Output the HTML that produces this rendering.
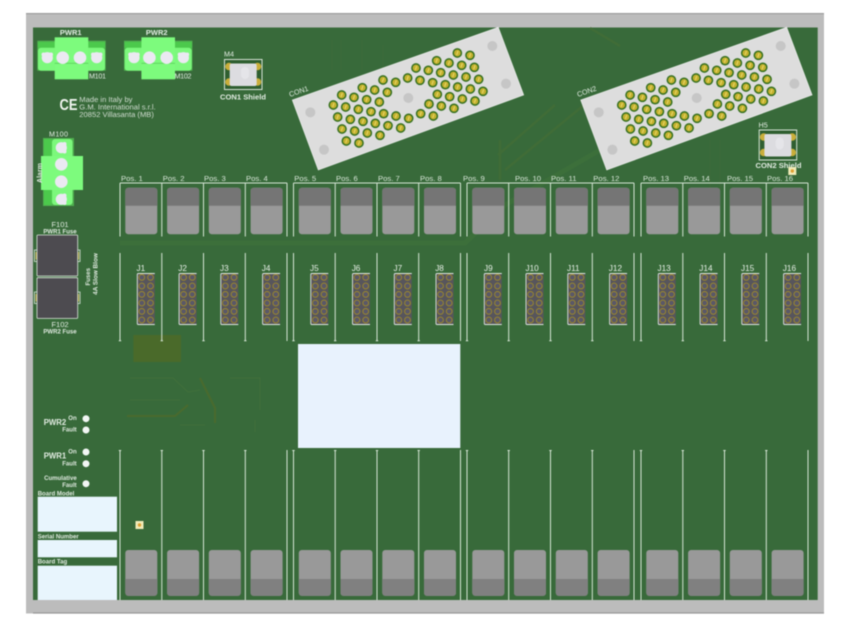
<!DOCTYPE html>
<html><head><meta charset="utf-8"><style>
html,body{margin:0;padding:0;background:#fff;width:850px;height:632px;overflow:hidden}
svg{display:block;filter:blur(.4px)}
text{font-family:"Liberation Sans",sans-serif;fill:#e2ece2}
.b{font-weight:bold}
.p{font-size:7.7px;fill:#d8e6d8}
.j{font-size:8.2px;fill:#e8f0e8}
.s{font-size:6.05px;font-weight:bold;fill:#dfe9df}
.m{font-size:7.6px;fill:#d0dcd0}
.k{font-size:7.2px;fill:#e2ece2}
</style></head><body>
<svg width="850" height="632" viewBox="0 0 850 632" xmlns="http://www.w3.org/2000/svg">
<defs>
<g id="rt"><rect width="32" height="46.5" rx="3" fill="#999"/><path d="M0 18V3a3 3 0 0 1 3-3h26a3 3 0 0 1 3 3v15z" fill="#757575"/></g>
<g id="rb"><rect width="32" height="45.7" rx="3" fill="#999"/><path d="M0 29h32v14a3 3 0 0 1-3 3H3a3 3 0 0 1-3-3z" fill="#808080"/></g>
<g id="ho"><circle r="2.9" fill="#5a5868" stroke="#a08c28" stroke-width=".9"/></g>
<g id="jc">
<rect width="18" height="51.7" rx="1.5" fill="#57555c"/>
<path d="M18 .5H1.5Q.5.5.5 1.5v49q0 1 1 1H18" fill="none" stroke="#dfe8df" stroke-width=".9"/>
<use href="#ho" x="5" y="4.4"/><use href="#ho" x="13.7" y="4.4"/>
<use href="#ho" x="5" y="13"/><use href="#ho" x="13.7" y="13"/>
<use href="#ho" x="5" y="21.4"/><use href="#ho" x="13.7" y="21.4"/>
<use href="#ho" x="5" y="30"/><use href="#ho" x="13.7" y="30"/>
<use href="#ho" x="5" y="38.4"/><use href="#ho" x="13.7" y="38.4"/>
<use href="#ho" x="5" y="47"/><use href="#ho" x="13.7" y="47"/>
</g>
<g id="c">
<use href="#rt" x="5.3" y="187.7"/>
<use href="#rb" x="5.3" y="550"/>
<use href="#jc" x="16.8" y="273"/>
<path d="M0 183V236.5M0 253V341M-1.2 340.7H1.2M0 450V600M-1.2 450.5H1.2" fill="none" stroke="#d5e5d5" stroke-width="1"/>
</g>
<g id="g"><circle r="14.5" fill="#35701f"/><circle r="10" fill="#c4b12e"/><path d="M2-6-2 6" stroke="#ead96c" stroke-width="3"/></g>
<g id="mh"><circle r="15" fill="#c6c6c6"/></g>
<g id="con">
<polygon points="292.3,100 498.3,27.3 523.7,95 318.3,170" fill="#dddddd" stroke="#f0f0f0" stroke-width=".6"/>
<g transform="translate(285,15) scale(.33333)">
<use href="#mh" x="622" y="93"/><use href="#mh" x="663" y="206"/><use href="#mh" x="370" y="249"/><use href="#mh" x="76" y="292"/><use href="#mh" x="117" y="404"/>
<use href="#g" x="517" y="114"/><use href="#g" x="555" y="121"/>
<use href="#g" x="455" y="137"/><use href="#g" x="492" y="144"/><use href="#g" x="530" y="151"/><use href="#g" x="568" y="157"/>
<use href="#g" x="393" y="159"/><use href="#g" x="430" y="166"/><use href="#g" x="467" y="173"/><use href="#g" x="505" y="180"/><use href="#g" x="543" y="186"/><use href="#g" x="581" y="193"/>
<use href="#g" x="294" y="195"/><use href="#g" x="332" y="202"/><use href="#g" x="368" y="189"/><use href="#g" x="405" y="196"/><use href="#g" x="443" y="203"/><use href="#g" x="481" y="209"/><use href="#g" x="518" y="216"/><use href="#g" x="556" y="222"/><use href="#g" x="594" y="229"/>
<use href="#g" x="232" y="218"/><use href="#g" x="269" y="225"/><use href="#g" x="307" y="232"/>
<use href="#g" x="170" y="240"/><use href="#g" x="207" y="247"/><use href="#g" x="245" y="254"/><use href="#g" x="283" y="261"/>
<use href="#g" x="145" y="270"/><use href="#g" x="182" y="276"/><use href="#g" x="220" y="283"/><use href="#g" x="258" y="290"/><use href="#g" x="296" y="296"/><use href="#g" x="333" y="303"/><use href="#g" x="371" y="310"/><use href="#g" x="407" y="296"/><use href="#g" x="445" y="303"/>
<use href="#g" x="457" y="238"/><use href="#g" x="494" y="245"/><use href="#g" x="532" y="252"/><use href="#g" x="570" y="258"/>
<use href="#g" x="432" y="267"/><use href="#g" x="469" y="273"/><use href="#g" x="507" y="280"/>
<use href="#g" x="158" y="306"/><use href="#g" x="196" y="313"/><use href="#g" x="234" y="319"/><use href="#g" x="271" y="325"/><use href="#g" x="309" y="332"/><use href="#g" x="347" y="339"/>
<use href="#g" x="171" y="342"/><use href="#g" x="209" y="348"/><use href="#g" x="247" y="354"/><use href="#g" x="285" y="361"/>
<use href="#g" x="184" y="378"/><use href="#g" x="222" y="384"/>
</g></g>
<g id="tb">
<rect x="37.3" y="40.7" width="68.4" height="30" fill="#4fb04f"/>
<rect x="38" y="42" width="67" height="6" fill="#4cc94c"/>
<rect x="38" y="47.7" width="67" height="23" rx="3" fill="#7cf87c"/>
<rect x="54.7" y="37.3" width="33.6" height="42" fill="#7dfb7d"/>
<path d="M54.7 63.3H88.3" stroke="#5ed05e" stroke-width=".8"/>
<g fill="#ebe9f2"><circle cx="47.3" cy="57.7" r="5.6"/><circle cx="62.7" cy="57.7" r="6.3"/><circle cx="80" cy="57.7" r="6.3"/><circle cx="96.7" cy="57.7" r="5.6"/></g>
<g fill="#ebe9f2"><circle cx="43.5" cy="54.5" r="2"/><circle cx="51" cy="54.5" r="2"/><circle cx="93" cy="54.5" r="2"/><circle cx="100.5" cy="54.5" r="2"/></g>
</g>
<g id="sh">
<rect x="224.5" y="59.5" width="37.5" height="30" fill="#2f5f30" stroke="#d8e4d8" stroke-width="1"/>
<g fill="#c9ae3a"><circle cx="229" cy="66.5" r="3.8"/><circle cx="257.5" cy="66.5" r="3.8"/><circle cx="229" cy="82" r="3.8"/><circle cx="257.5" cy="82" r="3.8"/></g>
<rect x="229.7" y="63.5" width="27" height="22.5" rx="2" fill="#dcdce0"/>
<rect x="241" y="67" width="8" height="12" rx="4" fill="#e5e5e9"/>
</g>
<g id="pad"><rect x="-4" y="-4" width="8" height="8" fill="#f1ebb8"/><circle r="1.7" fill="#e0a030"/></g>
</defs>

<rect x="26" y="13" width="798" height="600.5" fill="#bcbcbc"/>
<rect x="26" y="13" width="798" height="1.2" fill="#9c9c9c"/>
<rect x="33" y="612.4" width="791" height="1.2" fill="#959595"/>
<rect x="33" y="27.5" width="784.7" height="572.5" fill="#386a3a"/>

<g fill="none" stroke-linejoin="round">
<path d="M120 243H465L505 205 600 150 650 120" stroke="#3e723a" stroke-width="5" opacity=".7"/>
<path d="M498 155 555 105M505 170 590 100M500 180V140M590 28l30 18" stroke="#456d36" stroke-width="2.5" opacity=".7"/>
<path d="M332 40V70M341 40V70M362 40V70M383 45V70M710 140V190M720 140V190" stroke="#426b38" stroke-width="1" opacity=".6"/>
<path d="M200 378 215 408V423M127 416H175L188 405" stroke="#4a6a2e" stroke-width="2"/>
<path d="M130 378H173L188 392 200 390M130 400H180M230 378H260V410M255 420V432M180 425H205" stroke="#41703b" stroke-width="1"/>
</g>
<rect x="133.3" y="335" width="47.7" height="27" fill="#4a6a2a"/>

<use href="#tb"/>
<use href="#tb" x="86.7"/>
<g>
<rect x="43" y="138" width="31" height="68" fill="#4fb04f"/>
<rect x="44" y="139" width="8" height="66" fill="#4cc94c"/>
<rect x="52" y="139" width="20.5" height="66" rx="3" fill="#7cf87c"/>
<rect x="41" y="156" width="42" height="34" fill="#7dfb7d"/>
<g fill="#ebe9f2"><circle cx="61.3" cy="147.7" r="5.6"/><circle cx="61.3" cy="164.3" r="6.3"/><circle cx="61.3" cy="181.7" r="6.3"/><circle cx="61.3" cy="199.3" r="5.6"/>
<circle cx="64.5" cy="144" r="2"/><circle cx="64.5" cy="151.5" r="2"/><circle cx="64.5" cy="195.5" r="2"/><circle cx="64.5" cy="203" r="2"/></g>
</g>

<text x="70.7" y="35" text-anchor="middle" class="b" font-size="7.5">PWR1</text>
<text x="156.7" y="35" text-anchor="middle" class="b" font-size="7.5">PWR2</text>
<text x="89" y="78.5" class="k" textLength="17">M101</text>
<text x="174.5" y="78.5" class="k" textLength="17">M102</text>
<text x="49" y="136.3" class="k" textLength="19">M100</text>
<text x="42" y="183" transform="rotate(-90 42 183)" class="s" style="font-size:7px" textLength="20">Alarm</text>

<text x="59.5" y="110.2" class="b" font-size="15.5" textLength="18" lengthAdjust="spacingAndGlyphs" style="fill:#f2f6f2">CE</text>
<text x="79.3" y="102" class="m">Made in Italy by</text>
<text x="79.3" y="109.5" class="m">G.M. International s.r.l.</text>
<text x="79.3" y="117" class="m">20852 Villasanta (MB)</text>

<use href="#sh"/>
<text x="224" y="56.7" class="k">M4</text>
<text x="243" y="99.7" text-anchor="middle" class="b" font-size="7.6">CON1 Shield</text>
<use href="#sh" x="534.7" y="70.5"/>
<text x="758.5" y="127.5" class="k">H5</text>
<text x="778.5" y="168" text-anchor="middle" class="b" font-size="7.6">CON2 Shield</text>

<use href="#con"/>
<use href="#con" x="288.4"/>
<text x="290" y="97" transform="rotate(-19 290 97)" class="k">CON1</text>
<text x="578" y="97" transform="rotate(-19 578 97)" class="k">CON2</text>

<use href="#c" x="120"/><use href="#c" x="161.8"/><use href="#c" x="203.5"/><use href="#c" x="245.3"/>
<use href="#c" x="293.5"/><use href="#c" x="335.2"/><use href="#c" x="377"/><use href="#c" x="418.7"/>
<use href="#c" x="467"/><use href="#c" x="508.7"/><use href="#c" x="550.5"/><use href="#c" x="592.3"/>
<use href="#c" x="641"/><use href="#c" x="682.8"/><use href="#c" x="724.5"/><use href="#c" x="766.3"/>
<path d="M120 183H287M293.5 183H460.5M467 183H634M641 183H808M287 183V236.5M287 253V341M287 450V600M460.5 183V236.5M460.5 253V341M460.5 450V600M634 183V236.5M634 253V341M634 450V600M808 183V236.5M808 253V341M808 450V600" fill="none" stroke="#d5e5d5" stroke-width="1"/>

<text x="121" y="181.2" class="p">Pos. 1</text><text x="162.7" y="181.2" class="p">Pos. 2</text><text x="204" y="181.2" class="p">Pos. 3</text><text x="246" y="181.2" class="p">Pos. 4</text>
<text x="294.3" y="181.2" class="p">Pos. 5</text><text x="336" y="181.2" class="p">Pos. 6</text><text x="378" y="181.2" class="p">Pos. 7</text><text x="420" y="181.2" class="p">Pos. 8</text>
<text x="463" y="181.2" class="p">Pos. 9</text><text x="515" y="181.2" class="p">Pos. 10</text><text x="551" y="181.2" class="p">Pos. 11</text><text x="593.3" y="181.2" class="p">Pos. 12</text>
<text x="643" y="181.2" class="p">Pos. 13</text><text x="683.7" y="181.2" class="p">Pos. 14</text><text x="727" y="181.2" class="p">Pos. 15</text><text x="767" y="181.2" class="p">Pos. 16</text>

<text x="136.5" y="271" class="j">J1</text><text x="178.3" y="271" class="j">J2</text><text x="220" y="271" class="j">J3</text><text x="261.8" y="271" class="j">J4</text>
<text x="310" y="271" class="j">J5</text><text x="351.7" y="271" class="j">J6</text><text x="393.5" y="271" class="j">J7</text><text x="435.2" y="271" class="j">J8</text>
<text x="484" y="271" class="j">J9</text><text x="525.5" y="271" class="j">J10</text><text x="567" y="271" class="j">J11</text><text x="608.8" y="271" class="j">J12</text>
<text x="657.5" y="271" class="j">J13</text><text x="699.3" y="271" class="j">J14</text><text x="741" y="271" class="j">J15</text><text x="782.8" y="271" class="j">J16</text>

<g>
<path d="M37 250H34.5V261.5H37M77.5 250H80V261.5H77.5M37 292H34.5V303.5H37M77.5 292H80V303.5H77.5" fill="#386a3a" stroke="#dfe8df" stroke-width=".8"/>
<g fill="#b0a040"><rect x="35.5" y="252" width="1.8" height="7.5"/><rect x="77.3" y="252" width="1.8" height="7.5"/><rect x="35.5" y="294" width="1.8" height="7.5"/><rect x="77.3" y="294" width="1.8" height="7.5"/></g>
<rect x="37" y="235" width="40.7" height="41" rx="1" fill="#4d4b50" stroke="#dbe4db" stroke-width=".8"/>
<rect x="37" y="277.7" width="40.7" height="40.7" rx="1" fill="#4d4b50" stroke="#dbe4db" stroke-width=".8"/>
</g>
<text x="60" y="227" text-anchor="middle" class="k" style="font-size:7.6px">F101</text>
<text x="60" y="233.4" text-anchor="middle" class="s">PWR1 Fuse</text>
<text x="60" y="327" text-anchor="middle" class="k" style="font-size:7.6px">F102</text>
<text x="60" y="333.4" text-anchor="middle" class="s">PWR2 Fuse</text>
<text x="90" y="276.7" transform="rotate(-90 90 276.7)" text-anchor="middle" class="s">Fuses</text>
<text x="97.7" y="274" transform="rotate(-90 97.7 274)" text-anchor="middle" class="s" style="font-size:6.4px">4A Slow Blow</text>

<rect x="298" y="344" width="162.3" height="104" fill="#e8f2fd"/>

<text x="43.7" y="424.8" class="b" font-size="7.8">PWR2</text>
<text x="43.7" y="458.4" class="b" font-size="7.8">PWR1</text>
<text x="76.7" y="420" text-anchor="end" class="s">On</text>
<text x="76.7" y="431.5" text-anchor="end" class="s">Fault</text>
<text x="76.7" y="453.5" text-anchor="end" class="s">On</text>
<text x="76.7" y="465.5" text-anchor="end" class="s">Fault</text>
<text x="76.7" y="480" text-anchor="end" class="s">Cumulative</text>
<text x="76.7" y="486.8" text-anchor="end" class="s">Fault</text>
<g fill="#f2f6f4"><circle cx="86" cy="418.7" r="3.5"/><circle cx="86" cy="430" r="3.5"/><circle cx="86" cy="452" r="3.5"/><circle cx="86" cy="463.7" r="3.5"/><circle cx="86" cy="483.7" r="3.5"/></g>

<text x="37.7" y="495.3" class="s">Board Model</text>
<text x="37.7" y="538.3" class="s">Serial Number</text>
<text x="37.7" y="563.5" class="s">Board Tag</text>
<g fill="#e8f5fd"><rect x="37.7" y="496.7" width="79.3" height="35"/><rect x="37.7" y="540" width="79.3" height="17.3"/><rect x="37.7" y="565.7" width="79.3" height="34.3"/></g>

<use href="#pad" x="139.5" y="525"/>
<use href="#pad" x="792.3" y="171"/>
</svg>
</body></html>
